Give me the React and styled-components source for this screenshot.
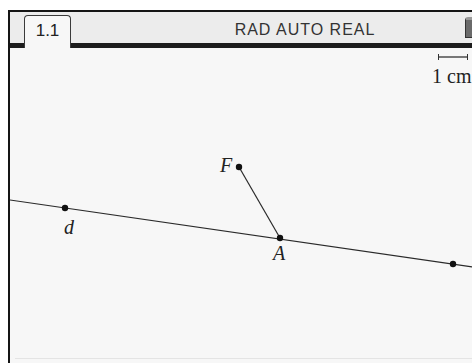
import React from "react";
import styled, { createGlobalStyle } from "styled-components";

const GlobalStyle = createGlobalStyle`
  html, body {
    margin: 0;
    padding: 0;
    background: #ffffff;
    overflow: hidden;
  }
`;

const points = [
  { x: 65, y: 208, label: "d", lx: 64, ly: 234 },
  { x: 280, y: 238, label: "A", lx: 273, ly: 260 },
  { x: 239, y: 167, label: "F", lx: 220, ly: 172 },
  { x: 453, y: 264 },
];

function App() {
  return (
    <>
      <GlobalStyle />
      <Screen>
        <Header>
          <Tab>1.1</Tab>
          <Title>RAD AUTO REAL</Title>
          <Battery />
        </Header>
        <Canvas>
          <svg width="462" height="315" viewBox="10 48 462 315">
            <line x1="10" y1="200" x2="472" y2="266.8" stroke="#2a2a2a" strokeWidth="1.2" />
            <line x1="239" y1="167" x2="280" y2="238" stroke="#2a2a2a" strokeWidth="1.2" />
            {points.map((p, i) => (
              <circle key={i} cx={p.x} cy={p.y} r="3.2" fill="#111" />
            ))}
            {points
              .filter((p) => p.label)
              .map((p) => (
                <Label key={p.label} x={p.lx} y={p.ly}>
                  {p.label}
                </Label>
              ))}
            <line x1="438" y1="57" x2="468" y2="57" stroke="#333" strokeWidth="1.3" />
            <line x1="438.5" y1="54" x2="438.5" y2="60" stroke="#333" strokeWidth="1" />
            <line x1="467.5" y1="54" x2="467.5" y2="60" stroke="#333" strokeWidth="1" />
            <Scale x="432" y="83">1 cm</Scale>
            <line x1="15" y1="358.5" x2="472" y2="358.5" stroke="#e4e4e4" strokeWidth="1" />
          </svg>
        </Canvas>
      </Screen>
    </>
  );
}

export default App;

const Screen = styled.div`
  margin: 10px 0 0 8px;
  width: 464px;
  height: 353px;
  border-top: 2px solid #151515;
  border-left: 2px solid #151515;
  display: flex;
  flex-direction: column;
  overflow: hidden;
`;

const Header = styled.div`
  height: 31px;
  flex: none;
  display: flex;
  align-items: flex-end;
  background: #ececec;
  border-bottom: 5px solid #1c1c1c;
  position: relative;
`;

const Tab = styled.div`
  margin-left: 14px;
  margin-bottom: -5px;
  width: 47px;
  height: 33px;
  box-sizing: border-box;
  background: #f7f7f7;
  border: 1.5px solid #3a3a3a;
  border-bottom: none;
  border-radius: 4px 4px 0 0;
  display: flex;
  justify-content: center;
  padding-top: 5px;
  font-family: "Liberation Sans", Arial, sans-serif;
  font-size: 17px;
  color: #222;
  position: relative;
  z-index: 1;
`;

const Title = styled.div`
  flex: 1;
  align-self: center;
  text-align: center;
  padding-left: 74px;
  padding-top: 5px;
  font-family: "Liberation Sans", Arial, sans-serif;
  font-size: 16px;
  letter-spacing: 1px;
  color: #333;
`;

const Battery = styled.div`
  width: 12px;
  height: 21px;
  margin-bottom: 5px;
  margin-right: -3px;
  box-sizing: border-box;
  background: #6a6a6a;
  border: 1px solid #333;
  border-top: 3px solid #9a9a9a;
  border-radius: 3px 3px 0 0;
  flex: none;
`;

const Canvas = styled.div`
  flex: 1;
  background: #f7f7f7;
  svg {
    display: block;
  }
`;

const Label = styled.text`
  font-family: "Liberation Serif", "Times New Roman", serif;
  font-style: italic;
  font-size: 20px;
  fill: #222;
`;

const Scale = styled.text`
  font-family: "Liberation Serif", "Times New Roman", serif;
  font-size: 20px;
  fill: #222;
`;
